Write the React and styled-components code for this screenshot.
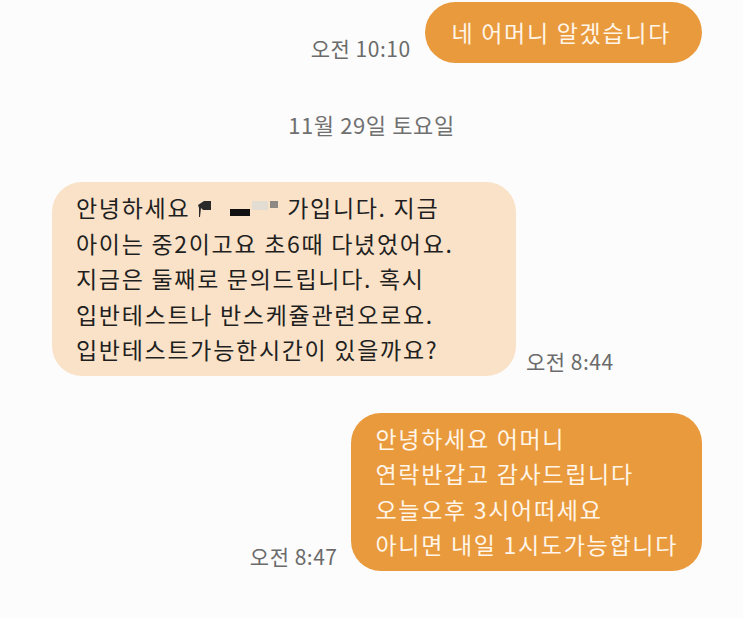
import React from "react"
import styled, { createGlobalStyle } from "styled-components"

const colors = {
  page: "#fcfcfc",
  orange: "#e99a3c",
  orangeText: "#fff5e8",
  peach: "#f9e2c8",
  ink: "#1f1f1f",
  time: "#6b6b6b",
  date: "#707070",
}

const GlobalStyle = createGlobalStyle`
  html, body {
    margin: 0;
    padding: 0;
    background: ${colors.page};
  }
  body {
    font-family: "Noto Sans CJK KR", "Noto Sans", sans-serif;
  }
`

const Thread = styled.div`
  width: 743px;
  height: 618px;
  overflow: hidden;
  display: flex;
  flex-direction: column;
  padding-top: 2px;
  box-sizing: border-box;
`

const Row = styled.div`
  display: flex;
  align-items: flex-end;
  justify-content: ${({ mine }) => (mine ? "flex-end" : "flex-start")};
  gap: ${({ gap = 13 }) => gap}px;
  padding: 0 41px 0 52px;
  margin-top: ${({ top = 0 }) => top}px;
`

const Bubble = styled.div`
  box-sizing: border-box;
  background: ${({ mine }) => (mine ? colors.orange : colors.peach)};
  color: ${({ mine }) => (mine ? colors.orangeText : colors.ink)};
  font-size: 23px;
  letter-spacing: 1.7px;
  line-height: 35.4px;
  padding: 8px 24px 8px 25px;
  border-radius: 30px;
  white-space: nowrap;
`

const PillBubble = styled(Bubble)`
  height: 61px;
  line-height: 61px;
  padding: 0 31px 0 27px;
  border-radius: 31px;
`

const WideBubble = styled(Bubble)`
  width: 464px;
  line-height: 35.6px;
  padding: 8px 24px;
`

const Line = styled.div``

const Time = styled.span`
  font-size: 21px;
  letter-spacing: 0.5px;
  line-height: 24px;
  color: ${colors.time};
  padding-bottom: 3px;
  white-space: nowrap;
`

const DateLabel = styled.div`
  margin-top: 46px;
  text-align: center;
  font-size: 22px;
  letter-spacing: 0.6px;
  line-height: 30px;
  color: ${colors.date};
`

const Redaction = () => (
  <svg width="90" height="24" viewBox="0 0 90 24" style={{ verticalAlign: "-3px" }}>
    <path d="M1 9 L7 5 L14 5 L14 14 L6 14 L4 12 L3 21 L2 21 L2 12 Z" fill="#2a2a2a" />
    <rect x="33" y="13" width="20" height="7" fill="#111" />
    <rect x="55" y="5" width="16" height="9" fill="#e3dcd3" />
    <rect x="73" y="5" width="8" height="7" fill="#8c8884" />
  </svg>
)

export default function App() {
  return (
    <>
      <GlobalStyle />
      <Thread>
        <Row mine gap={14}>
          <Time>오전 10:10</Time>
          <PillBubble mine>네 어머니 알겠습니다</PillBubble>
        </Row>

        <DateLabel>11월 29일 토요일</DateLabel>

        <Row top={43} gap={10}>
          <WideBubble>
            <Line>
              안녕하세요 <Redaction />가입니다. 지금
            </Line>
            <Line>아이는 중2이고요 초6때 다녔었어요.</Line>
            <Line>지금은 둘째로 문의드립니다. 혹시</Line>
            <Line>입반테스트나 반스케쥴관련오로요.</Line>
            <Line>입반테스트가능한시간이 있을까요?</Line>
          </WideBubble>
          <Time>오전 8:44</Time>
        </Row>

        <Row mine top={37} gap={13}>
          <Time>오전 8:47</Time>
          <Bubble mine>
            <Line>안녕하세요 어머니</Line>
            <Line>연락반갑고 감사드립니다</Line>
            <Line>오늘오후 3시어떠세요</Line>
            <Line>아니면 내일 1시도가능합니다</Line>
          </Bubble>
        </Row>
      </Thread>
    </>
  )
}
